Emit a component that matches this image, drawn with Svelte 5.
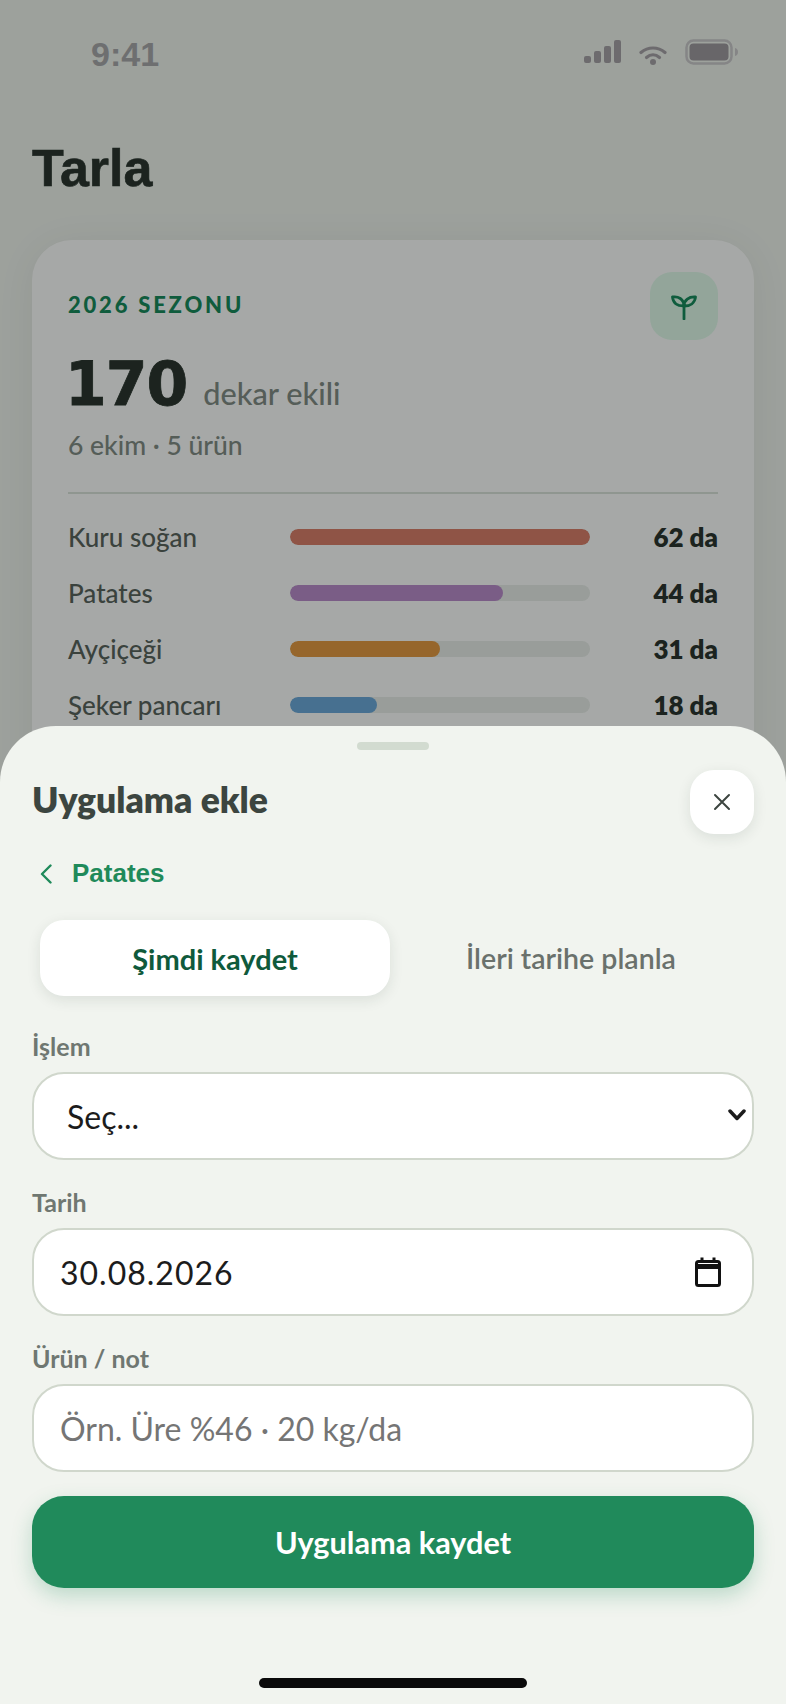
<script>
	const crops = [
		{ name: 'Kuru soğan', da: 62, color: '#dc7e6a' },
		{ name: 'Patates', da: 44, color: '#bc8ccd' },
		{ name: 'Ayçiçeği', da: 31, color: '#e79a42' },
		{ name: 'Şeker pancarı', da: 18, color: '#6da9dc' }
	];
	const max = 62;
</script>

<div class="phone">
	<header class="status">
		<span class="time">9:41</span>
		<div class="status-icons">
			<svg class="signal" width="37" height="23" viewBox="0 0 37 23">
				<rect x="0" y="16" width="7" height="7" rx="2" />
				<rect x="10" y="11" width="7" height="12" rx="2" />
				<rect x="20" y="6" width="7" height="17" rx="2" />
				<rect x="30" y="0" width="7" height="23" rx="2" />
			</svg>
			<svg class="wifi" width="28" height="20" viewBox="0 0 28 20" fill="none">
				<path d="M2 7.5C9 1.5 19 1.5 26 7.5" stroke-width="3.2" stroke-linecap="round" />
				<path d="M7.5 12.5C11.5 9 16.5 9 20.5 12.5" stroke-width="3.2" stroke-linecap="round" />
				<circle cx="14" cy="17" r="3" class="dot" />
			</svg>
			<svg class="battery" width="54" height="26" viewBox="0 0 54 26">
				<rect x="1.5" y="1.5" width="45" height="23" rx="7" class="shell" />
				<rect x="4.5" y="4.5" width="39" height="17" rx="4" class="charge" />
				<path d="M50 9c2 .5 3 2 3 4s-1 3.500-3 4z" class="nub" />
			</svg>
		</div>
	</header>

	<h1>Tarla</h1>

	<section class="card">
		<div class="card-top">
			<span class="season">2026 SEZONU</span>
			<div class="sprout">
				<svg width="28" height="28" viewBox="0 0 28 28" fill="none">
					<path d="M14 27V14" />
					<path d="M14 14C7 14 3 11 2.500 5C8 4 14 7 14 14Z" />
					<path d="M14 14C14 8 19 4.500 25.500 5C25 11 20 14 14 14Z" />
				</svg>
			</div>
		</div>
		<div class="total"><strong>170</strong><span>dekar ekili</span></div>
		<div class="sub">6 ekim · 5 ürün</div>
		<hr />
		<ul class="crops">
			{#each crops as crop}
				<li>
					<span class="crop-name">{crop.name}</span>
					<span class="track"><span class="fill" style="width:{(crop.da / max) * 100}%;background:{crop.color}"></span></span>
					<span class="crop-da">{crop.da} da</span>
				</li>
			{/each}
		</ul>
	</section>

	<div class="scrim"></div>

	<section class="sheet">
		<div class="handle"></div>
		<div class="sheet-head">
			<h2>Uygulama ekle</h2>
			<button class="close" aria-label="Kapat">
				<svg width="18" height="18" viewBox="0 0 18 18" fill="none">
					<path d="M2 2L16 16M16 2L2 16" />
				</svg>
			</button>
		</div>
		<button class="back">
			<svg width="12" height="20" viewBox="0 0 12 20" fill="none"><path d="M10.500 1.500L2 10L10.500 18.500" /></svg>
			<span>Patates</span>
		</button>
		<div class="tabs">
			<button class="tab active">Şimdi kaydet</button>
			<button class="tab">İleri tarihe planla</button>
		</div>
		<label class="field">
			<span>İşlem</span>
			<div class="control">
				<select><option>Seç...</option></select>
				<svg class="chevron" width="18" height="12" viewBox="0 0 18 12" fill="none"><path d="M2 2L9 9.500L16 2" /></svg>
			</div>
		</label>
		<label class="field">
			<span>Tarih</span>
			<div class="control">
				<input class="date" type="text" value="30.08.2026" />
				<svg class="calendar" width="26" height="30" viewBox="0 0 26 30" fill="none">
					<rect x="1.500" y="4.500" width="23" height="24" rx="2" stroke-width="3" />
					<path d="M1.500 9.500H24.500" stroke-width="5" />
					<path d="M7 0.500V4M19 0.500V4" stroke-width="3" />
				</svg>
			</div>
		</label>
		<label class="field">
			<span>Ürün / not</span>
			<div class="control">
				<input type="text" placeholder="Örn. Üre %46 · 20 kg/da" />
			</div>
		</label>
		<button class="submit">Uygulama kaydet</button>
		<div class="home"></div>
	</section>
</div>

<style>
	:global(body) {
		margin: 0;
		background: #f1f4ef;
	}
	.phone {
		position: relative;
		width: 786px;
		height: 1704px;
		overflow: hidden;
		background: #f1f4ef;
		font-family: Lato, 'Liberation Sans', sans-serif;
		box-sizing: border-box;
		padding: 0 32px;
	}
	.status {
		display: flex;
		justify-content: space-between;
		align-items: flex-start;
		height: 138px;
		padding: 38px 15px 0 59px;
		box-sizing: border-box;
	}
	.time {
		font-family: 'Liberation Sans', sans-serif;
		font-size: 34px;
		font-weight: 700;
		line-height: 32px;
		color: #a9a8ab;
	}
	.status-icons {
		display: flex;
		align-items: flex-start;
		gap: 18px;
		padding-top: 1px;
	}
	.signal {
		fill: #a8a2a8;
		margin-top: 1px;
	}
	.wifi {
		margin-top: 6px;
		stroke: #a8a2a8;
	}
	.wifi .dot {
		fill: #a8a2a8;
		stroke: none;
	}
	.battery .shell {
		fill: none;
		stroke: #cccacc;
		stroke-width: 2.500;
	}
	.battery .charge {
		fill: #a09aa0;
	}
	.battery .nub {
		fill: #cccacc;
	}
	h1 {
		margin: 0;
		font-family: 'Liberation Sans', sans-serif;
		font-size: 52px;
		font-weight: 700;
		line-height: 60px;
		color: #2b342e;
		-webkit-text-stroke: 0.6px #2b342e;
	}
	.card {
		margin-top: 42px;
		background: #fff;
		border-radius: 40px;
		padding: 32px 36px;
		box-shadow: 0 4px 40px rgba(0, 0, 0, 0.06);
		height: 760px;
		box-sizing: border-box;
	}
	.card-top {
		display: flex;
		justify-content: space-between;
		align-items: center;
	}
	.season {
		font-size: 22px;
		font-weight: 900;
		letter-spacing: 2.8px;
		color: #178a5c;
		padding-bottom: 4px;
	}
	.sprout {
		width: 68px;
		height: 68px;
		border-radius: 22px;
		background: #e2fbec;
		display: flex;
		align-items: center;
		justify-content: center;
	}
	.sprout path {
		stroke: #178a5c;
		stroke-width: 2.800;
		stroke-linecap: round;
		stroke-linejoin: round;
	}
	.total {
		display: flex;
		align-items: baseline;
		gap: 16px;
		margin-top: 9px;
		line-height: 70px;
	}
	.total strong {
		margin-left: -3px;
		font-family: 'DejaVu Sans', sans-serif;
		font-size: 60px;
		font-weight: 700;
		letter-spacing: -1px;
		color: #2b342e;
		-webkit-text-stroke: 0.8px #2b342e;
	}
	.total span {
		font-size: 30.700px;
		font-weight: 500;
		color: #838c86;
	}
	.sub {
		font-size: 26.500px;
		font-weight: 500;
		line-height: 32px;
		color: #838c86;
	}
	hr {
		margin: 31px 0 0;
		border: 0;
		height: 2px;
		background: #dce4dc;
	}
	.crops {
		list-style: none;
		margin: 0;
		padding: 15px 0 0;
		display: flex;
		flex-direction: column;
	}
	.crops li {
		display: grid;
		grid-template-columns: 222px 300px 1fr;
		align-items: center;
		height: 56px;
		font-size: 26px;
	}
	.crop-name {
		font-weight: 500;
		color: #5a635d;
	}
	.track {
		display: block;
		height: 16px;
		border-radius: 8px;
		background: #ebefeb;
		overflow: hidden;
	}
	.fill {
		display: block;
		height: 100%;
		border-radius: 8px;
	}
	.crop-da {
		text-align: right;
		font-weight: 800;
		color: #2b342e;
	}
	.scrim {
		position: absolute;
		inset: 0;
		background: rgba(0, 6, 2, 0.35);
	}
	.sheet {
		position: absolute;
		left: 0;
		right: 0;
		bottom: 0;
		height: 978px;
		box-sizing: border-box;
		padding: 16px 32px 0;
		background: #f1f4ef;
		border-radius: 56px 56px 0 0;
	}
	.handle {
		width: 72px;
		height: 8px;
		margin: 0 auto;
		border-radius: 4px;
		background: #d2dbd0;
	}
	.sheet-head {
		display: flex;
		justify-content: space-between;
		align-items: center;
		margin-top: 20px;
	}
	h2 {
		margin: 0 0 6px;
		font-family: Lato, sans-serif;
		font-size: 35.500px;
		font-weight: 800;
		color: #3c4540;
	}
	.close {
		width: 64px;
		height: 64px;
		padding: 0;
		border: 0;
		border-radius: 24px;
		background: #fff;
		box-shadow: 0 4px 14px rgba(30, 50, 40, 0.1);
		display: flex;
		align-items: center;
		justify-content: center;
	}
	.close path {
		stroke: #3c4540;
		stroke-width: 2;
		stroke-linecap: round;
	}
	.back {
		display: flex;
		align-items: center;
		gap: 20px;
		margin-top: 24px;
		padding: 0 0 0 8px;
		border: 0;
		background: none;
		font-family: 'Liberation Sans', sans-serif;
		font-size: 26px;
		font-weight: 700;
		color: #1f8a5a;
	}
	.back path {
		stroke: #1f8a5a;
		stroke-width: 2.400;
		stroke-linecap: round;
		stroke-linejoin: round;
	}
	.tabs {
		display: grid;
		grid-template-columns: 1fr 1fr;
		gap: 6px;
		margin-top: 23px;
		padding: 8px;
	}
	.tab {
		height: 76px;
		border: 0;
		border-radius: 24px;
		background: none;
		font-family: Lato, sans-serif;
		font-size: 28.500px;
		font-weight: 600;
		color: #6a716c;
	}
	.tab.active {
		background: #fff;
		font-size: 29px;
		font-weight: 700;
		color: #0f5a3c;
		box-shadow: 0 4px 14px rgba(30, 50, 40, 0.1);
	}
	.field {
		display: block;
		margin-top: 26px;
	}
	.field > span {
		display: block;
		font-size: 25px;
		font-weight: 700;
		line-height: 32px;
		margin-bottom: 10px;
		color: #6f7771;
	}
	.control {
		position: relative;
	}
	select,
	input {
		display: block;
		width: 100%;
		height: 88px;
		box-sizing: border-box;
		border: 2px solid #d0d7cc;
		border-radius: 32px;
		background: #fff;
		font-family: Lato, sans-serif;
		font-size: 32px;
		color: #1c1c1c;
		padding: 0 26px;
		outline: none;
		appearance: none;
	}
	select {
		padding-left: 33px;
	}
	input.date {
		letter-spacing: 1px;
	}
	input::placeholder {
		color: #757575;
		opacity: 1;
	}
	.chevron,
	.calendar {
		position: absolute;
		top: 50%;
		transform: translateY(-50%);
	}
	.chevron {
		right: 8px;
		margin-top: -1px;
	}
	.chevron path {
		stroke: #1c1c1c;
		stroke-width: 3.500;
		stroke-linecap: round;
		stroke-linejoin: round;
	}
	.calendar {
		right: 33px;
		stroke: #111;
	}
	.submit {
		display: block;
		width: 100%;
		height: 92px;
		margin-top: 24px;
		border: 0;
		border-radius: 32px;
		background: #208a5b;
		color: #fff;
		font-family: Lato, sans-serif;
		font-size: 30.700px;
		font-weight: 700;
		box-shadow: 0 8px 20px rgba(32, 138, 91, 0.25);
	}
	.home {
		position: absolute;
		left: 259px;
		bottom: 16px;
		width: 268px;
		height: 10px;
		border-radius: 5px;
		background: #0a0a0a;
	}
</style>
